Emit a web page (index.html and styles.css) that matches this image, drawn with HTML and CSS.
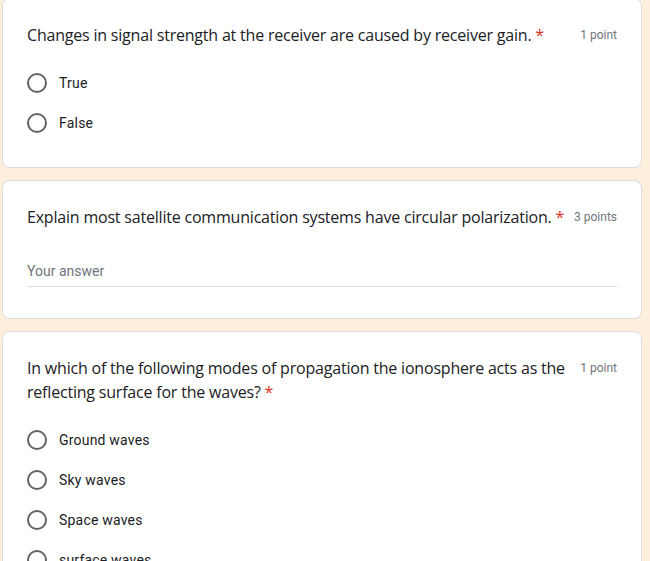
FILE: index.html
```html
<!DOCTYPE html>
<html lang="en">
<head>
<meta charset="utf-8">
<title>Form</title>
<link rel="stylesheet" href="styles.css">
</head>
<body>
<main class="list">
  <section class="card card-first">
    <div class="head">
      <div class="title">Changes in signal strength at the receiver are caused by receiver gain.&nbsp;<span class="req">*</span></div>
      <div class="points">1 point</div>
    </div>
    <div class="options">
      <label class="opt"><span class="radio"></span><span class="opt-text">True</span></label>
      <label class="opt"><span class="radio"></span><span class="opt-text">False</span></label>
    </div>
  </section>

  <section class="card">
    <div class="head">
      <div class="title">Explain most satellite communication systems have circular polarization.&nbsp;<span class="req">*</span></div>
      <div class="points">3 points</div>
    </div>
    <div class="answer"><span class="placeholder">Your answer</span></div>
  </section>

  <section class="card">
    <div class="head">
      <div class="title">In which of the following modes of propagation the ionosphere acts as the reflecting surface for the waves?&nbsp;<span class="req">*</span></div>
      <div class="points">1 point</div>
    </div>
    <div class="options">
      <label class="opt"><span class="radio"></span><span class="opt-text">Ground waves</span></label>
      <label class="opt"><span class="radio"></span><span class="opt-text">Sky waves</span></label>
      <label class="opt"><span class="radio"></span><span class="opt-text">Space waves</span></label>
      <label class="opt"><span class="radio"></span><span class="opt-text">surface waves</span></label>
    </div>
  </section>
</main>
</body>
</html>
```

FILE: styles.css
```css
html, body {
  margin: 0;
  padding: 0;
  background: #fdefdc;
  overflow: hidden;
}
body {
  font-family: Roboto, "Liberation Sans", Arial, sans-serif;
  color: #202124;
}
.list {
  width: 640px;
  margin-left: 2px;
  margin-top: -2px;
  display: flex;
  flex-direction: column;
  gap: 12px;
}
.card {
  background: #fff;
  border: 1px solid #dadce0;
  border-radius: 8px;
  padding: 24px;
}
.head {
  display: flex;
  align-items: flex-start;
  justify-content: space-between;
}
.title {
  font-family: "Open Sans", Roboto, sans-serif;
  font-size: 16px;
  line-height: 24px;
  color: #202124;
  letter-spacing: -0.2px;
}
.req {
  color: #d93025;
}
.points {
  flex-shrink: 0;
  margin-left: 8px;
  font-size: 12px;
  line-height: 24px;
  color: #70757a;
}
.options {
  margin-top: 16px;
  display: flex;
  flex-direction: column;
}
.opt {
  height: 40px;
  display: flex;
  align-items: center;
  gap: 12px;
}
.radio {
  width: 20px;
  height: 20px;
  box-sizing: border-box;
  border: 2px solid #5f6368;
  border-radius: 50%;
  flex-shrink: 0;
}
.opt-text {
  font-size: 14px;
  color: #202124;
  letter-spacing: 0.2px;
}
.answer {
  margin-top: 32px;
  padding-bottom: 5px;
  border-bottom: 1px solid #dadce0;
  margin-bottom: 7px;
}
.placeholder {
  font-size: 14px;
  line-height: 20px;
  color: #70757a;
}
```
